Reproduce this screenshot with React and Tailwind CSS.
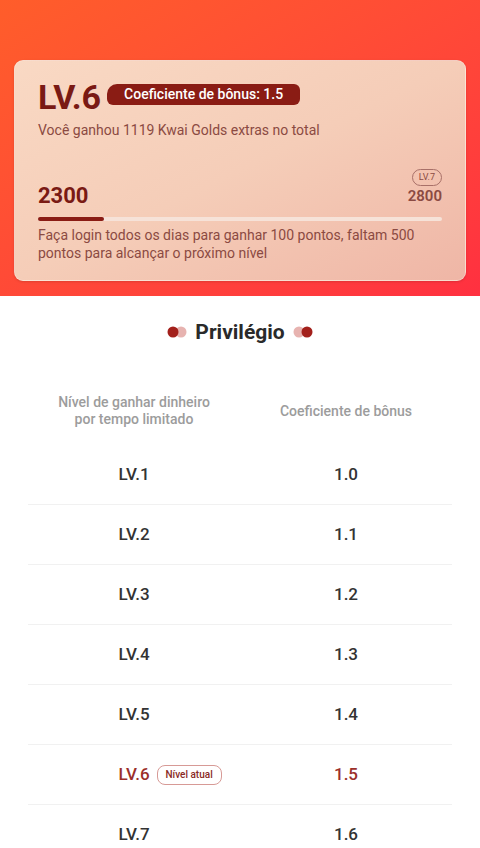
import React from 'react';

const levels = [
  { lv: 'LV.1', coef: '1.0' },
  { lv: 'LV.2', coef: '1.1' },
  { lv: 'LV.3', coef: '1.2' },
  { lv: 'LV.4', coef: '1.3' },
  { lv: 'LV.5', coef: '1.4' },
  { lv: 'LV.6', coef: '1.5', current: true },
  { lv: 'LV.7', coef: '1.6' },
];

function Dots({ flip }) {
  return (
    <svg width="20" height="12" viewBox="0 0 20 12">
      {flip ? (
        <>
          <circle cx="6" cy="6" r="5.5" fill="#e7b3b0" />
          <circle cx="14" cy="6" r="5.5" fill="#a3201b" />
        </>
      ) : (
        <>
          <circle cx="14" cy="6" r="5.5" fill="#e7b3b0" />
          <circle cx="6" cy="6" r="5.5" fill="#a3201b" />
        </>
      )}
    </svg>
  );
}

export default function App() {
  return (
    <div className="w-[480px] h-[848px] overflow-hidden bg-white font-['Roboto',sans-serif]">
      {/* header */}
      <div className="bg-gradient-to-br from-[#ff5d2a] to-[#ff3040] pt-[60px] pb-[15px] px-[14px]">
        <div className="rounded-[9px] border border-white/30 bg-gradient-to-br from-[#f9d9c4] via-[#f5cdb8] to-[#efb6a6] pt-[20px] pb-[18px] px-[23px] shadow-sm">
          <div className="flex items-center gap-[6px]">
            <span className="text-[34px] leading-[32px] font-bold text-[#7a1a14]">LV.6</span>
            <span className="h-[21px] flex items-center px-[17px] rounded-[6px] rounded-tl-[10px] bg-[#8a1c14] text-white text-[14px] font-medium -mt-[5px]">
              Coeficiente de bônus: 1.5
            </span>
          </div>
          <p className="mt-[8px] text-[14px] leading-[18px] text-[#8b4a42]">
            Você ganhou 1119 Kwai Golds extras no total
          </p>
          <div className="mt-[30px] flex justify-between items-end">
            <span className="text-[22px] leading-[20px] font-bold text-[#7a1a14]">2300</span>
            <div className="flex flex-col items-end">
              <span className="h-[17px] px-[6px] flex items-center rounded-full border border-[#a87068] text-[9px] text-[#8b4a42]">LV.7</span>
              <span className="text-[15px] leading-[20px] font-semibold text-[#8b4a42]">2800</span>
            </div>
          </div>
          <div className="mt-[11px] h-[4px] rounded-full bg-[#f6e2d8] flex">
            <div className="w-[66px] h-[4px] rounded-full bg-[#8a1c14]" />
          </div>
          <p className="mt-[5px] text-[14px] leading-[18px] text-[#8b4a42]">
            Faça login todos os dias para ganhar 100 pontos, faltam 500 pontos para alcançar o próximo nível
          </p>
        </div>
      </div>

      {/* privileges */}
      <div className="pt-[23px] flex items-center justify-center gap-[8px]">
        <Dots />
        <span className="text-[21px] leading-[26px] font-bold text-[#2a2a2a]">Privilégio</span>
        <Dots flip />
      </div>

      <div className="mx-[28px] mt-[32px]">
        <div className="grid grid-cols-2 h-[68px] items-center text-center text-[14px] leading-[17px] font-medium text-[#9c9c9c]">
          <div>
            Nível de ganhar dinheiro
            <br />
            por tempo limitado
          </div>
          <div>Coeficiente de bônus</div>
        </div>
        {levels.map((l) => (
          <div
            key={l.lv}
            className={`grid grid-cols-2 h-[60px] items-center text-center text-[17px] font-medium border-b border-[#f1f1f1] ${
              l.current ? 'text-[#9b2f2a]' : 'text-[#333333]'
            }`}
          >
            <div className="flex justify-center">
              <span className="relative">
                {l.lv}
                {l.current && (
                  <span className="absolute left-full top-1/2 -translate-y-1/2 ml-[7px] h-[20px] w-[65px] flex items-center justify-center rounded-[8px] border border-[#d79a96] text-[10px] font-medium text-[#8a2a24] whitespace-nowrap">
                    Nível atual
                  </span>
                )}
              </span>
            </div>
            <div>{l.coef}</div>
          </div>
        ))}
      </div>
    </div>
  );
}
